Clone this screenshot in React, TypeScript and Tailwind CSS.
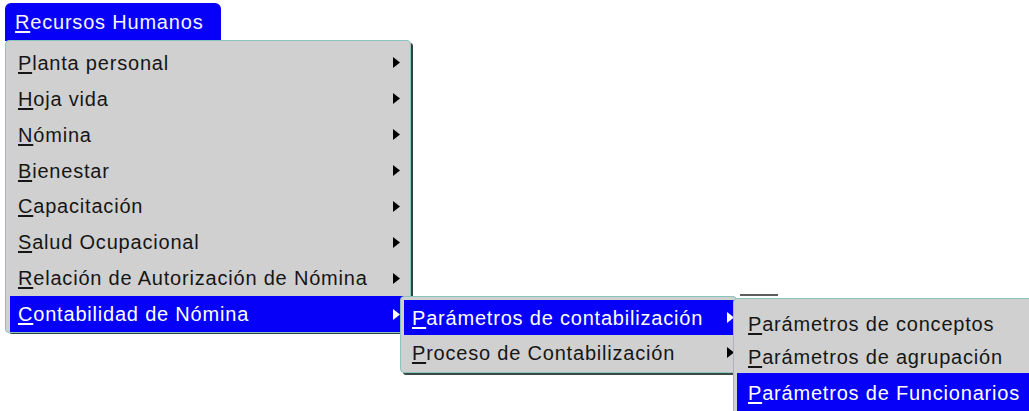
const mainItems = [
  "Planta personal",
  "Hoja vida",
  "Nómina",
  "Bienestar",
  "Capacitación",
  "Salud Ocupacional",
  "Relación de Autorización de Nómina",
  "Contabilidad de Nómina",
];

const subItems = ["Parámetros de contabilización", "Proceso de Contabilización"];

const leafItems = [
  "Parámetros de conceptos",
  "Parámetros de agrupación",
  "Parámetros de Funcionarios",
];

// first letter underlined, like the old mnemonic menus
function Label({ text }: { text: string }) {
  return (
    <span>
      <span className="underline underline-offset-2">{text[0]}</span>
      {text.slice(1)}
    </span>
  );
}

function Arrow({ light }: { light?: boolean }) {
  return (
    <svg width="7" height="11" viewBox="0 0 7 11" className="shrink-0">
      <path d="M0 0 L7 5.5 L0 11 Z" fill={light ? "#ffffff" : "#000000"} />
    </svg>
  );
}

function Row({
  text,
  active,
  arrow,
  className,
}: {
  text: string;
  active?: boolean;
  arrow?: boolean;
  className: string;
}) {
  return (
    <div
      className={[
        "flex items-center justify-between",
        className,
        active ? "bg-[#0600f8] text-white" : "text-[#161616]",
      ].join(" ")}
    >
      <Label text={text} />
      {arrow && <Arrow light={active} />}
    </div>
  );
}

export default function App() {
  return (
    <div className="relative h-[411px] w-[1029px] overflow-hidden bg-white font-['Liberation_Sans',Arial,sans-serif] text-[20px] tracking-[0.8px]">
      <div className="absolute left-[5px] top-[3px] flex h-[38px] w-[216px] items-center rounded-t-[6px] bg-[#0600f8] pl-[10px] text-[#f4f4ff]">
        <Label text="Recursos Humanos" />
      </div>

      <div className="absolute left-[5px] top-[40px] flex h-[293px] w-[406px] flex-col rounded-[4px] border border-[#8cc4bc] bg-[#d0d0d0] pl-[4px] pr-[6px] pt-[4px] shadow-[3px_2px_0_-1px_#2f4442]">
        {mainItems.map((item, i) => (
          <Row
            key={item}
            text={item}
            arrow
            active={i === 7}
            className="h-[36px] pl-[8px] pr-[4px]"
          />
        ))}
      </div>

      <div className="absolute left-[400px] top-[296px] flex h-[77px] w-[337px] flex-col rounded-[4px] border border-[#8cc4bc] bg-[#d0d0d0] pl-[3px] pt-[3px] shadow-[2px_3px_0_-1px_#3a4a48]">
        {subItems.map((item, i) => (
          <Row
            key={item}
            text={item}
            arrow
            active={i === 0}
            className="h-[35px] pl-[8px] pr-[2px]"
          />
        ))}
      </div>

      <div className="absolute left-[740px] top-[294px] h-[2px] w-[38px] bg-[#5e5e5e]" />

      <div className="absolute left-[733px] top-[298px] flex h-[120px] w-[310px] flex-col rounded-[4px] border border-[#8cc4bc] bg-[#d0d0d0] pl-[3px] pt-[8px]">
        {leafItems.map((item, i) => (
          <Row
            key={item}
            text={item}
            active={i === 2}
            className={i === 2 ? "h-[40px] items-start pl-[11px] pt-[5px]" : "h-[33px] pl-[11px]"}
          />
        ))}
      </div>
    </div>
  );
}
